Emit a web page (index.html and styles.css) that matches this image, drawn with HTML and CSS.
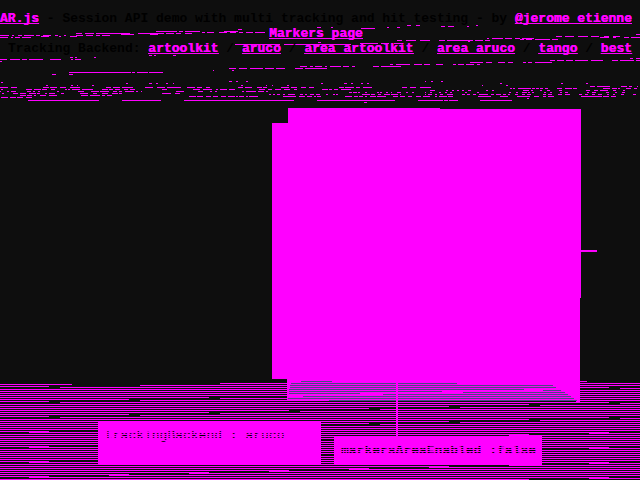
FILE: index.html
```
<!DOCTYPE html>
<html lang="en">
<head>
<meta charset="utf-8">
<title>AR.js session demo</title>
<link rel="stylesheet" href="styles.css">
</head>
<body>
<svg class="scene" viewBox="0 0 640 480" aria-hidden="true">
  <defs>
    <pattern id="scan-upper" width="640" height="15" y="387" patternUnits="userSpaceOnUse">
      <path class="line" d="M60 .5H609M620 1.5H640M0 2.5H529M540 3.5H640M0 4.5H449M460 5.5H640M0 6.5H369M380 7.5H640M0 8.5H289M300 9.5H640M0 10.5H209M220 11.5H640M0 12.5H129M140 13.5H640M0 14.5H49"/>
    </pattern>
    <pattern id="scan-lower" width="640" height="15" y="387" patternUnits="userSpaceOnUse">
      <path class="line" d="M29 .5H609M589 1.5H640M0 2.5H529M509 3.5H640M0 4.5H449M429 5.5H640M0 6.5H369M349 7.5H640M0 8.5H289M269 9.5H640M0 10.5H209M189 11.5H640M0 12.5H129M109 13.5H640M0 14.5H49"/>
    </pattern>
  </defs>
  <!-- detector traces -->
  <g class="line" transform="translate(0 .5)">
    <path d="M156 31h21m2 0h4m2 0h15M156 33h8m2 0h8m2 0h5m4 0h7M202 32h3m2 0h7m5 0h8m3 0h6m3 0h4m3 0h7m2 0h10"/>
    <path d="M0 35h9m3 0h2m4 0h4m2 0h10m2 0h4m3 0h8m4 0h3m6 0h2M0 37h8m3 0h2m2 0h5m2 0h9M41 36h8m10 0h2m9 0h7M76 33h6m3 0h9m2 0h34m8 0h20M76 35h7m3 0h7m3 0h4m2 0h8M121 34h13m16 0h8"/>
    <path d="M238 29h4M224 31h14M317 27h4m10 0h2M361 28h14M387 27h2m8 0h3M407 25h4m5 0h4"/>
    <path d="M235 44h45m4 0h67M360 43h18m3 0h8m5 0h7M318 42h3"/>
    <path d="M397 40h5m4 0h10m4 0h10m9 0h6m2 0h26m2 0h8m2 0h5M468 41h2M487 38h2m3 0h11m2 0h7m3 0h5m2 0h12M520 39h4m2 0h6m3 0h15m2 0h6"/>
    <path d="M441 26h4m3 0h6m13 0h2M476 25h2M556 36h6m3 0h9m4 0h10m3 0h8m5 0h5m4 0h7M600 37h9m4 0h3m8 0h5m2 0h9M636 34h4"/>
    <path d="M0 59h7m3 0h10m2 0h5m2 0h14m7 0h11m10 0h2m2 0h6M70 57h3m2 0h2m17 0h2M0 61h2M149 55h3m2 0h2m17 0h3"/>
    <path d="M229 68h7m3 0h8m3 0h13m2 0h9m2 0h9m10 0h8m2 0h6m3 0h13M232 70h2M309 68h13M300 66h7m3 0h3m2 0h7m3 0h2m3 0h11m2 0h6m3 0h3"/>
    <path d="M373 66h6m2 0h20M390 64h3m3 0h14m4 0h8m2 0h6m6 0h7M470 62h13m3 0h6m6 0h7m3 0h5m10 0h3m2 0h4m3 0h17M453 64h3m2 0h6m2 0h8m3 0h3"/>
    <path d="M550 60h5m2 0h7m2 0h7m2 0h13m3 0h12m9 0h6m2 0h14m2 0h4M630 58h3m3 0h4"/>
    <path d="M69 72h62m1 0h3m2 0h11m1 0h14M52 74h4m13 0h4M213 70h1"/>
    <path d="M1 82h2M126 83h2m21 0h3m4 0h2m8 0h2m5 0h1M46 85h2m23 0h2m4 0h1m14 0h2M229 81h3m4 0h2m8 0h2M321 83h2m21 0h3m4 0h2m8 0h2m4 0h2M241 85h2m23 0h1m5 0h1m14 0h2M425 81h1m5 0h2m8 0h2M500 83h2m59 0h2m23 0h2M482 85h1m23 0h2M425 87h6"/>
    <path d="M0 87h8M11 87h6M43 87h6M50 87h7M60 87h6M70 87h10M106 87h5M113 87h7M122 87h11M145 87h8M157 87h8M167 87h14M187 87h8M197 87h5M206 87h4M238 87h5M245 87h7M257 87h5M263 87h4M281 87h8M291 87h6M301 87h5M309 87h5M339 87h5M345 87h9M356 87h4M363 87h9M402 87h5M410 87h6M420 87h5"/>
    <path d="M1 89h2M26 89h6M34 89h7M42 89h5M51 89h4M65 89h2M68 89h2M72 89h8M82 89h11M102 89h6M109 89h4M115 89h5M124 89h4M130 89h5M162 89h5M193 89h7M203 89h9M216 89h2M220 89h7M229 89h6M259 89h6M268 89h4M275 89h6M284 89h6M294 89h3M322 89h6M329 89h3M334 89h4M341 89h10"/>
    <path d="M0 91h1M7 91h2M11 91h5M27 91h4M33 91h2M38 91h2M57 91h2M78 91h6M91 91h8M100 91h9M113 91h4M119 91h3M125 91h9M136 91h2M141 91h1M176 91h8M198 91h5M210 91h2M215 91h2M242 91h2M246 91h3M249 91h7M258 91h6M266 91h2"/>
    <path d="M2 93h2M13 93h5M20 93h6M29 93h7M37 93h3M45 93h2M49 93h6M61 93h3M80 93h8M93 93h4M102 93h6M112 93h6M119 93h3M162 93h9M175 93h5M20 95h6M27 95h5M34 95h2M40 95h6M49 95h8M81 95h7M90 95h10M102 95h3M107 95h5M1 97h7M10 97h6M17 97h6M26 97h6M189 96h7M197 96h6M206 96h5"/>
    <path d="M349 92h3M353 92h4M358 92h2M365 92h2M377 92h2M380 92h2M386 92h2M391 92h1M397 92h4M406 92h2M412 92h2M269 94h2M273 94h2M277 94h3M283 94h2M288 94h7M300 94h3M305 94h2M310 94h4M316 94h4M326 94h2M333 94h2M336 94h2M362 94h8M371 94h4M378 94h3M384 94h6M391 94h7M400 94h1"/>
    <path d="M213 96h5M221 96h5M228 96h7M236 96h2M239 96h5M246 96h2M249 96h9M283 96h13M299 96h6M307 96h5M314 96h2M317 96h4M345 96h7M354 96h4M359 96h4M365 96h2M370 96h6M377 96h9M393 96h5M400 96h5M408 96h4M416 96h5M423 96h7"/>
    <path d="M590 86h5M597 86h13M621 86h6M629 86h3M637 86h1M510 88h2M513 88h2M518 88h13M532 88h3M536 88h3M540 88h3M545 88h3M557 88h5M565 88h7M573 88h4M603 88h7M612 88h5M618 88h2M626 88h5M634 88h3"/>
    <path d="M430 90h5M446 90h2M452 90h2M457 90h2M462 90h2M468 90h3M486 90h2M492 90h2M523 90h6M531 90h2M540 90h2M547 90h3M559 90h3M586 90h4M594 90h4M600 90h8M613 90h3M623 90h2M425 92h1M430 92h2M439 92h2M445 92h2M450 92h2M465 92h2M477 92h2M509 92h2M516 92h2M522 92h5M528 92h2M532 92h2M544 92h2M550 92h2M560 92h2M565 92h3M587 92h2M592 92h4M606 92h3M615 92h2M622 92h3"/>
    <path d="M425 94h1M428 94h4M435 94h2M440 94h3M447 94h6M462 94h3M467 94h3M473 94h3M479 94h9M491 94h3M496 94h5M503 94h3M508 94h2M515 94h3M522 94h3M527 94h4M543 94h3M548 94h4M558 94h4M565 94h5M579 94h3M585 94h3M592 94h3M598 94h4M607 94h2M613 94h2M621 94h3M633 94h3M435 96h2M439 96h8M448 96h5M478 96h13M500 96h8M517 96h13M534 96h5M543 96h3M548 96h6M581 96h21M603 96h6M611 96h5"/>
    <path d="M28 100h71M122 100h39M184 100h110M317 100h78M418 100h25M444 100h4M449 100h9M480 100h32M364 102h3M527 98h2"/>
  </g>
  <!-- camera scan lines -->
  <rect x="0" y="387" width="640" height="39" fill="url(#scan-upper)"/>
  <rect x="0" y="426" width="640" height="54" fill="url(#scan-lower)"/>
  <path class="line" d="M0 384.5H72M140 385.5H640M0 386.5H49M220 383.5H640M580 381.5H587"/>
  <!-- marker cube -->
  <path class="cube" d="M288 108H440V109H581V298H580V402H576V401H540V400H287V379H272V123H288Z"/>
  <path class="cube" d="M581 250H597V252H581Z"/>
  <path class="shade" d="M301 381.5H332M291 383.5H457M290 385.5H553M290 387.5H556M289 389.5H524M543 390.5H561M289 391.5H442M463 392.5H565M289 393.5H360M383 394.5H568M303 396.5H571M288 398.5H574M329 400.5H577"/>
  <path class="gap" d="M329 401.5H379M380 401.5H405"/>
  <path class="cube" d="M396 379h2v57h-2z"/>
</svg>

<main class="page">
  <header class="info">
    <div class="headline"><a>AR.js</a> - Session API demo with multi tracking and hit testing - by <a>@jerome_etienne</a><br><a>Markers page</a></div>
    <div class="backends">Tracking Backend: <a>artoolkit</a> / <a>aruco</a> / <a>area artoolkit</a> / <a>area aruco</a> / <a>tango</a> / <a>best</a></div>
  </header>
  <footer class="controls">
    <div class="button backend">trackingBackend : aruco</div>
    <div class="button area">markersAreaEnabled :false</div>
  </footer>
</main>
</body>
</html>
```
FILE: styles.css
```
* { box-sizing: border-box; }
body {
  margin: 0;
  width: 640px;
  height: 480px;
  overflow: hidden;
  background: #0e0e0e;
  color: #000;
  font: bold 13px/15px "Liberation Mono", monospace;
}
.scene {
  position: absolute;
  inset: 0;
  width: 640px;
  height: 480px;
  shape-rendering: crispEdges;
}
.line { stroke: #f0f; stroke-width: 1; fill: none; }
.cube { fill: #f0f; }
.shade { stroke: #4d4584; fill: none; }
.gap { stroke: #0e0e0e; fill: none; }
.page {
  position: relative;
  display: flex;
  flex-direction: column;
  justify-content: space-between;
  height: 480px;
  padding: 11px 0 15px;
}
.info { text-align: center; white-space: nowrap; }
.headline { width: 632px; }
.info a {
  color: #f0f;
  text-decoration: underline;
  text-decoration-thickness: 1px;
  text-underline-offset: 1px;
  text-decoration-skip-ink: none;
  text-shadow: 0 0 #f0f, 0 0 #f0f;
}
.controls {
  display: flex;
  align-items: flex-end;
  gap: 13px;
  padding-left: 98px;
}
.button {
  position: relative;
  padding: 7px 0 0 7px;
  background: #f0f;
  font-weight: normal;
  white-space: nowrap;
}
.button::after {
  content: "";
  position: absolute;
  inset: 0;
  background: repeating-linear-gradient(#f0f0 0 1px, #f0f 1px 2px);
}
.backend { width: 223px; height: 44px; }
.area { width: 208px; height: 29px; font-weight: bold; }
.area::after { bottom: 11px; }
```
